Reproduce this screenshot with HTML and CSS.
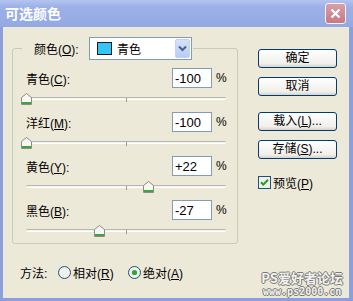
FILE: index.html
```html
<!DOCTYPE html>
<html lang="zh-CN">
<head>
	<meta charset="UTF-8">
	<meta name="viewport" content="width=device-width, initial-scale=1.0">
	<title>可选颜色</title>
	<link rel="stylesheet" href="styles.css">
</head>
<body>
	<div class="dialog">
		<div class="title-bar">
			<span class="title">可选颜色</span>
			<a href="#" class="btn-close"><svg width="13" height="13" viewBox="0 0 13 13"><path d="M2.5 2.5L10.5 10.5M10.5 2.5L2.5 10.5" stroke="#fff" stroke-width="2.2"/></svg></a>
		</div>
		<div class="frame">
			<div class="col-main">
				<fieldset class="group">
					<legend class="group-head">
						<label class="head-label">颜色(<u>O</u>):</label>
						<div class="combo">
							<span class="swatch"></span>
							<span class="combo-text">青色</span>
							<span class="combo-btn"><svg width="9" height="7" viewBox="0 0 9 7"><path d="M1 1.5L4.5 5L8 1.5" fill="none" stroke="#4d6185" stroke-width="2"/></svg></span>
						</div>
					</legend>

					<div class="item-color">
						<div class="row-value">
							<label class="name">青色(<u>C</u>):</label>
							<input class="box-value" type="text" value="-100">
							<span class="unit">%</span>
						</div>
						<div class="slider">
							<span class="track"></span>
							<span class="tick"></span>
							<span class="thumb" style="left: 0%;"><svg width="11" height="12" viewBox="0 0 11 12"><path d="M0.5 4.5L5.5 0.5L10.5 4.5V11.5H0.5Z" fill="#f7f7f4" stroke="#8c8c84"/><path d="M1 9.5H10M1 10.5H10" stroke="#3fa33f"/></svg></span>
						</div>
					</div>
					<div class="item-color">
						<div class="row-value">
							<label class="name">洋红(<u>M</u>):</label>
							<input class="box-value" type="text" value="-100">
							<span class="unit">%</span>
						</div>
						<div class="slider">
							<span class="track"></span>
							<span class="tick"></span>
							<span class="thumb" style="left: 0%;"><svg width="11" height="12" viewBox="0 0 11 12"><path d="M0.5 4.5L5.5 0.5L10.5 4.5V11.5H0.5Z" fill="#f7f7f4" stroke="#8c8c84"/><path d="M1 9.5H10M1 10.5H10" stroke="#3fa33f"/></svg></span>
						</div>
					</div>
					<div class="item-color">
						<div class="row-value">
							<label class="name">黄色(<u>Y</u>):</label>
							<input class="box-value" type="text" value="+22">
							<span class="unit">%</span>
						</div>
						<div class="slider">
							<span class="track"></span>
							<span class="tick"></span>
							<span class="thumb" style="left: 61%;"><svg width="11" height="12" viewBox="0 0 11 12"><path d="M0.5 4.5L5.5 0.5L10.5 4.5V11.5H0.5Z" fill="#f7f7f4" stroke="#8c8c84"/><path d="M1 9.5H10M1 10.5H10" stroke="#3fa33f"/></svg></span>
						</div>
					</div>
					<div class="item-color">
						<div class="row-value">
							<label class="name">黑色(<u>B</u>):</label>
							<input class="box-value" type="text" value="-27">
							<span class="unit">%</span>
						</div>
						<div class="slider">
							<span class="track"></span>
							<span class="tick"></span>
							<span class="thumb" style="left: 36.5%;"><svg width="11" height="12" viewBox="0 0 11 12"><path d="M0.5 4.5L5.5 0.5L10.5 4.5V11.5H0.5Z" fill="#f7f7f4" stroke="#8c8c84"/><path d="M1 9.5H10M1 10.5H10" stroke="#3fa33f"/></svg></span>
						</div>
					</div>
				</fieldset>

				<div class="method">
					<span class="method-label">方法:</span>
					<label class="option">
						<svg width="13" height="13" viewBox="0 0 13 13"><circle cx="6.5" cy="6.5" r="6" fill="#f1f0ea" stroke="#1c5180"/></svg>
						<span>相对(<u>R</u>)</span>
					</label>
					<label class="option">
						<svg width="13" height="13" viewBox="0 0 13 13"><circle cx="6.5" cy="6.5" r="6" fill="#f1f0ea" stroke="#1c5180"/><circle cx="6.5" cy="6.5" r="2.6" fill="#2ea82e"/></svg>
						<span>绝对(<u>A</u>)</span>
					</label>
				</div>
			</div>

			<div class="col-side">
				<a href="#" class="btn">确定</a>
				<a href="#" class="btn">取消</a>
				<a href="#" class="btn btn-load">载入(<u>L</u>)...</a>
				<a href="#" class="btn">存储(<u>S</u>)...</a>
				<label class="check">
					<svg width="13" height="13" viewBox="0 0 13 13"><rect x="0.5" y="0.5" width="12" height="12" fill="#f1f0ea" stroke="#1c5180"/><path d="M3 6.2L5.3 8.6L10 3.8" fill="none" stroke="#21a121" stroke-width="2"/></svg>
					<span>预览(<u>P</u>)</span>
				</label>
			</div>
		</div>

		<div class="watermark">
			<div class="mark-name">PS爱好者论坛</div>
			<div class="mark-url">www.ps2000.cn</div>
		</div>
	</div>
</body>
</html>
```

FILE: styles.css
```css
*{ box-sizing: border-box;}
body{
	margin: 0; color: black;
	font: 12px "Liberation Sans", "Noto Sans CJK SC", sans-serif;
}
u{ text-decoration: underline;}
.dialog{
	position: relative; width: 353px; height: 301px; overflow: hidden;
	background-color: #ece9d8;
}
.title-bar{
	display: flex; align-items: center; justify-content: space-between;
	height: 27px; padding: 0 7px 1px 5px;
	background: linear-gradient(#b4c4f0, #9db1e8 25%, #94a9e3);
}
.title{
	color: white; font-size: 14px; font-weight: bold;
	font-family: "Noto Sans CJK SC", sans-serif;
}
.btn-close{
	display: flex; align-items: center; justify-content: center;
	width: 21px; height: 21px; border: 1px solid #f4f4f4; border-radius: 3px;
	background: linear-gradient(#d9a0a6, #c57983);
}
.frame{
	display: flex; height: 274px; padding-left: 9px;
	border: 3px solid #8b9fdd; border-top: 0; border-right-width: 4px;
}
.col-main{ width: 226px;}
.group{
	width: 226px; min-width: 0; margin: 10px 0 0; padding: 8px 11px 0 13px;
	border: 1px solid #cbcab9; border-radius: 3px;
}
.group-head{
	display: flex; align-items: center; margin-left: -4px; padding: 0 1px 0 12px;
}
.head-label{ width: 55px;}
.combo{
	display: flex; align-items: center; width: 103px; height: 23px;
	padding: 1px; border: 1px solid #7f9db9; background-color: white;
}
.swatch{
	width: 15px; height: 13px; margin: 0 5px 0 6px;
	border: 1px solid #1a1a1a; background-color: #33c6f4;
}
.combo-text{ flex: 1;}
.combo-btn{
	display: flex; align-items: center; justify-content: center;
	width: 15px; height: 19px; border: 1px solid #c3d1f3; border-radius: 2px;
	background: linear-gradient(#d6e2fc, #b7cbf6);
}
.row-value{ display: flex; align-items: center; height: 20px;}
.name{ flex: 1;}
.box-value{
	width: 40px; height: 20px; padding: 0 2px; border: 1px solid #7f9db9;
	font: inherit; font-size: 13px; outline: none;
}
.unit{ width: 10px; margin-left: 4px;}
.slider{ position: relative; height: 24px; padding-top: 9px;}
.item-color:last-child .slider{ height: 23px;}
.track{
	display: block; height: 3px; border-radius: 2px;
	border-top: 1px solid #b8b7ad; border-bottom: 1px solid white;
	background-color: #f4f3ee;
}
.tick{
	position: absolute; left: 100px; top: 10px; width: 1px; height: 4px;
	background-color: #9c9b92;
}
.thumb{
	position: absolute; top: 5px; margin-left: -5px; width: 11px; height: 12px;
}
.thumb svg{ display: block;}
.method{
	display: flex; align-items: center; height: 14px; margin-top: 21px; padding-left: 8px;
}
.method-label{ width: 38px;}
.option{ display: flex; align-items: center; gap: 2px; width: 70px;}
.option svg{ flex: none;}
.col-side{
	display: flex; flex-direction: column; margin-left: 20px; padding-top: 22px;
}
.btn{
	display: block; width: 79px; height: 19px; margin-bottom: 9px;
	border: 1px solid #003c74; border-radius: 3px;
	background: linear-gradient(#ffffff, #f0efea 80%, #d8d2c6);
	color: black; text-align: center; line-height: 17px; text-decoration: none;
}
.btn-load{ margin-top: 7px;}
.check{ display: flex; align-items: center; gap: 2px; margin-top: 6px;}
.watermark{
	position: absolute; right: 10px; bottom: 4px; text-align: center;
	color: #f2f2ee; font-weight: bold;
	text-shadow: 1px 0 #7a7a7a, -1px 0 #7a7a7a, 0 1px #7a7a7a, 0 -1px #7a7a7a;
}
.mark-name{ font: bold 13px/17px "Noto Sans CJK SC", sans-serif;}
.mark-url{ font: bold 10px/11px "DejaVu Sans Mono", monospace;}
```
